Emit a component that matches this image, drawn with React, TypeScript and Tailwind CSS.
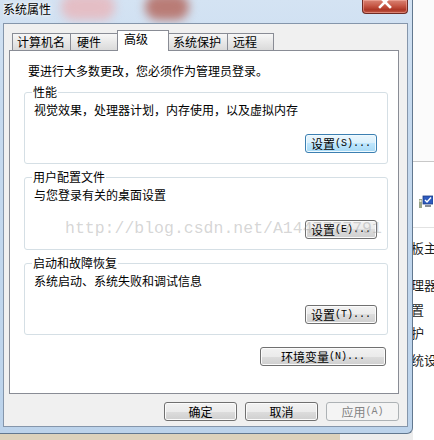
import React from 'react';

type BtnProps = {
  label: string;
  hint: string;
  width: string;
  variant?: 'normal' | 'focus' | 'disabled';
};

function Btn({ label, hint, width, variant = 'normal' }: BtnProps) {
  const styles = {
    normal:
      'border-[#707070] bg-[linear-gradient(#f2f2f2_0%,#ebebeb_50%,#dddddd_50%,#cfcfcf_100%)] text-black shadow-[inset_0_0_0_1px_#fbfbfb]',
    focus:
      'border-[#3c7fb1] bg-[linear-gradient(#eaf6fd_0%,#d9f0fc_50%,#bee6fd_50%,#a7d9f5_100%)] text-black shadow-[inset_0_0_0_1px_#effaff]',
    disabled: 'border-[#adb2b5] bg-[#f4f4f4] text-[#838383]',
  };
  return (
    <div
      className={`flex h-[19px] items-center justify-center rounded-[3px] border text-[12px] leading-[16px] ${width} ${styles[variant]}`}
    >
      <span>{label}</span>
      <span className="font-['Liberation_Mono',monospace] text-[10px]">{hint}</span>
    </div>
  );
}

type GroupProps = {
  title: string;
  desc: string;
  button: React.ReactNode;
  btnGap: string;
};

function Group({ title, desc, button, btnGap }: GroupProps) {
  return (
    <fieldset className="mt-[5px] rounded-[3px] border border-[#d5dfe5] pb-[10px]">
      <legend className="ml-[7px] px-[1px] leading-[16px]">{title}</legend>
      <div className="mt-[2px] pl-[9px]">{desc}</div>
      <div className={`flex justify-end pr-[10px] ${btnGap}`}>{button}</div>
    </fieldset>
  );
}

export default function App() {
  const tabs = [
    { name: '计算机名', cls: 'w-[59px] pl-[4px]' },
    { name: '硬件', cls: 'w-[48px] -ml-px pl-[6px]' },
    { name: '高级', cls: 'w-[52px] -ml-px pl-[6px]', active: true },
    { name: '系统保护', cls: 'w-[60px] -ml-px pl-[4px]' },
    { name: '远程', cls: 'w-[47px] -ml-px pl-[5px]' },
  ];

  return (
    <div className="flex h-[440px] w-[434px] overflow-hidden bg-white font-['Noto_Sans_CJK_SC',sans-serif] text-[12px] leading-[16px] text-black">
      <div className="relative flex w-[413px] shrink-0 flex-col bg-[#ececec]">
        {/* window frame */}
        <div className="flex h-[434px] flex-col rounded-br-[6px] border-r border-b border-[#62788f] bg-[linear-gradient(180deg,#d4e3f3_0%,#c6daef_25%,#bcd3eb_100%)] pb-[6px] pl-[3px] pr-[4px]">
          <div className="relative flex h-[23px] items-start justify-between overflow-hidden">
            <div className="absolute left-[58px] top-[-6px] h-[26px] w-[54px] rounded-full bg-[#e4bec5] blur-[5px]" />
            <div className="absolute left-[142px] top-[-6px] h-[26px] w-[44px] rounded-full bg-[#b97c76] blur-[5px]" />
            <span className="relative mt-[1px] [text-shadow:0_0_6px_#fff,0_0_3px_#fff]">系统属性</span>
            <div className="relative flex h-[14px] w-[46px] justify-center overflow-hidden rounded-b-[4px] border border-t-0 border-[#6e2b24] bg-[linear-gradient(180deg,#d98474_0%,#c65745_45%,#ad3726_75%,#c25a47_100%)] shadow-[inset_0_0_0_1px_rgba(255,190,180,0.45)]">
              <svg width="14" height="12" viewBox="0 0 14 12" className="-mt-[3px]">
                <path d="M2 0 L12 10 M12 0 L2 10" stroke="#fff" strokeWidth="2.6" strokeLinecap="square" />
              </svg>
            </div>
          </div>

          {/* client area */}
          <div className="flex flex-1 flex-col border border-[#8596ab] bg-[#f0f0f0] pt-[6px]">
            <div className="ml-[5px] mr-[8px] flex flex-col">
              <div className="flex items-end pl-[3px]">
                {tabs.map((t) =>
                  t.active ? (
                    <div
                      key={t.name}
                      className={`relative z-10 -mb-px h-[21px] border border-b-0 border-[#898c95] bg-white ${t.cls}`}
                    >
                      {t.name}
                    </div>
                  ) : (
                    <div
                      key={t.name}
                      className={`h-[17px] border border-b-0 border-[#898c95] bg-linear-to-b from-[#f7f7f7] to-[#dadada] ${t.cls}`}
                    >
                      {t.name}
                    </div>
                  ),
                )}
              </div>

              <div className="flex h-[344px] flex-col border border-[#898c95] bg-white pl-[14px] pr-[10px] pt-[12px]">
                <div className="ml-[4px]">要进行大多数更改，您必须作为管理员登录。</div>
                <Group
                  title="性能"
                  desc="视觉效果，处理器计划，内存使用，以及虚拟内存"
                  btnGap="mt-[16px]"
                  button={<Btn label="设置" hint="(S)..." width="w-[72px]" variant="focus" />}
                />
                <Group
                  title="用户配置文件"
                  desc="与您登录有关的桌面设置"
                  btnGap="mt-[17px]"
                  button={<Btn label="设置" hint="(E)..." width="w-[72px]" />}
                />
                <Group
                  title="启动和故障恢复"
                  desc="系统启动、系统失败和调试信息"
                  btnGap="mt-[16px]"
                  button={<Btn label="设置" hint="(T)..." width="w-[72px]" />}
                />
                <div className="mt-[12px] flex justify-end pr-[2px]">
                  <Btn label="环境变量" hint="(N)..." width="w-[126px]" />
                </div>
              </div>
            </div>

            <div className="mt-[8px] flex justify-end gap-[8px] pr-[8px]">
              <Btn label="确定" hint="" width="w-[73px]" />
              <Btn label="取消" hint="" width="w-[73px]" />
              <Btn label="应用" hint="(A)" width="w-[73px]" variant="disabled" />
            </div>
          </div>
        </div>

        <div className="flex h-[6px]">
          <div className="w-[340px] bg-[#dcd2bc]" />
          <div className="flex-1 bg-[#ededed]" />
        </div>

        {/* watermark */}
        <div className="pointer-events-none absolute left-[65px] top-[219px] whitespace-nowrap font-['Liberation_Mono',monospace] text-[16.5px] leading-[20px] text-[rgba(150,150,150,0.4)]">
          http://blog.csdn.net/A1447777791
        </div>
      </div>

      {/* window behind */}
      <div className="flex flex-1 flex-col overflow-hidden bg-white">
        <div className="h-[162px] shrink-0 border-b border-[#c8c8c8] bg-[#fbfbfb]" />
        <div className="h-[66px] shrink-0 border-b border-[#e2e2e2] pl-[6px] pt-[33px]">
          <svg width="14" height="14" viewBox="0 0 14 14">
            <rect x="0" y="4" width="3" height="9" fill="#9aa58a" />
            <rect x="0.5" y="5" width="2" height="2" fill="#e8e8d0" />
            <rect x="4" y="1" width="10" height="8" fill="#2d5bbf" stroke="#1d3c86" strokeWidth="0.8" />
            <path d="M6 5 L8 7 L12 2.5" stroke="#fff" strokeWidth="1.4" fill="none" />
            <rect x="6" y="10" width="6" height="2" fill="#8a8f96" />
          </svg>
        </div>
        <div className="flex flex-col whitespace-nowrap text-[13px] leading-[16px] text-[#1e1e1e]">
          <span className="-ml-[2px] mt-[12px]">板主</span>
          <span className="-ml-[2px] mt-[21px]">理器</span>
          <span className="-ml-[2px] mt-[9px]">置</span>
          <span className="-ml-[2px] mt-[7px]">护</span>
          <span className="-ml-[2px] mt-[11px]">统设</span>
        </div>
      </div>
    </div>
  );
}
